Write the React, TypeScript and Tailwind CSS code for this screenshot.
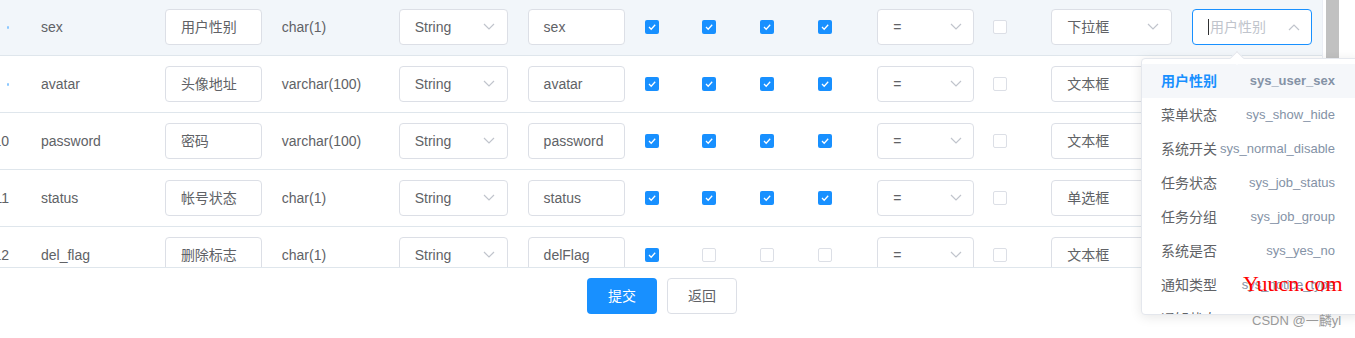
import React from "react";

const FONT = { fontFamily: '"Liberation Sans", "Noto Sans CJK SC", sans-serif' };

type Row = {
  idx: string;
  name: string;
  desc: string;
  type: string;
  field: string;
  checks: boolean[];
  html: string;
  hover?: boolean;
  dot?: boolean;
};

const rows: Row[] = [
  { idx: "8", name: "sex", desc: "用户性别", type: "char(1)", field: "sex", checks: [true, true, true, true], html: "下拉框", hover: true, dot: true },
  { idx: "9", name: "avatar", desc: "头像地址", type: "varchar(100)", field: "avatar", checks: [true, true, true, true], html: "文本框", dot: true },
  { idx: "10", name: "password", desc: "密码", type: "varchar(100)", field: "password", checks: [true, true, true, true], html: "文本框" },
  { idx: "11", name: "status", desc: "帐号状态", type: "char(1)", field: "status", checks: [true, true, true, true], html: "单选框" },
  { idx: "12", name: "del_flag", desc: "删除标志", type: "char(1)", field: "delFlag", checks: [true, false, false, false], html: "文本框" },
];

const dict = [
  ["用户性别", "sys_user_sex"],
  ["菜单状态", "sys_show_hide"],
  ["系统开关", "sys_normal_disable"],
  ["任务状态", "sys_job_status"],
  ["任务分组", "sys_job_group"],
  ["系统是否", "sys_yes_no"],
  ["通知类型", "sys_notice_type"],
  ["通知状态", "sys_notice_status"],
];

function Chevron({ up = false }: { up?: boolean }) {
  return (
    <svg width="12" height="8" viewBox="0 0 12 8" className="shrink-0">
      {up ? (
        <polyline points="1,7 6,2 11,7" fill="none" stroke="#c0c4cc" strokeWidth="1.2" />
      ) : (
        <polyline points="1,1 6,6 11,1" fill="none" stroke="#c0c4cc" strokeWidth="1.2" />
      )}
    </svg>
  );
}

function Check({ on }: { on: boolean }) {
  return on ? (
    <div className="w-[14px] h-[14px] rounded-[2px] bg-[#1890ff] flex items-center justify-center">
      <svg width="10" height="10" viewBox="0 0 10 10">
        <polyline points="2,5 4.2,7.2 8.2,2.8" fill="none" stroke="#fff" strokeWidth="1.3" />
      </svg>
    </div>
  ) : (
    <div className="w-[14px] h-[14px] rounded-[2px] bg-white border border-[#dcdfe6]" />
  );
}

function Input({ text }: { text: string }) {
  return (
    <div className="w-[97px] h-[36px] border border-[#dcdfe6] rounded-[4px] bg-white flex items-center px-[15px] text-[14px] text-[#606266] whitespace-nowrap overflow-hidden">
      {text}
    </div>
  );
}

function Select({ text, w, pr }: { text: string; w: string; pr: string }) {
  return (
    <div className={`${w} ${pr} h-[36px] border border-[#dcdfe6] rounded-[4px] bg-white flex items-center justify-between pl-[15px] text-[14px] text-[#606266] whitespace-nowrap`}>
      <span>{text}</span>
      <Chevron />
    </div>
  );
}

export default function App() {
  return (
    <div className="relative w-[1355px] h-[338px] bg-white overflow-hidden" style={FONT}>
      <div className="flex h-[268px] border-b border-[#dfe6ec]">
        <div className="w-[1323px] h-[267px] overflow-hidden border-r border-[#ebeef5]">
          <div className="mt-[-1px]">
            {rows.map((r) => (
              <div
                key={r.name}
                className={`flex items-center h-[57px] border-b border-[#dfe6ec] text-[14px] text-[#606266] ${r.hover ? "bg-[#f2f6fa]" : "bg-white"}`}
              >
                <div className="w-[31px] flex">
                  <div className="w-[9px] overflow-hidden flex justify-end whitespace-nowrap">
                    {r.dot ? <span className="w-[2px] h-[3px] bg-[#8cc8ff] rounded-full" /> : <span>{r.idx}</span>}
                  </div>
                </div>
                <div className="w-[124px] pl-[10px]">{r.name}</div>
                <div className="w-[117px] pl-[10px]">
                  <Input text={r.desc} />
                </div>
                <div className="w-[117px] pl-[10px]">{r.type}</div>
                <div className="w-[129px] pl-[10px]">
                  <Select text="String" w="w-[109px]" pr="pr-[12px]" />
                </div>
                <div className="w-[117px] pl-[10px]">
                  <Input text={r.field} />
                </div>
                {r.checks.map((c, i) => (
                  <div key={i} className="w-[58px] pl-[10px]">
                    <Check on={c} />
                  </div>
                ))}
                <div className="w-[117px] pl-[11px]">
                  <Select text="=" w="w-[97px]" pr="pr-[11px]" />
                </div>
                <div className="w-[58px] pl-[10px]">
                  <Check on={false} />
                </div>
                <div className="w-[141px] pl-[10px]">
                  <Select text={r.html} w="w-[121px]" pr="pr-[12px]" />
                </div>
                <div className="w-[140px] pl-[10px]">
                  {r.hover ? (
                    <div className="w-[120px] h-[36px] border border-[#1890ff] rounded-[4px] bg-white flex items-center justify-between pl-[15px] pr-[11px] text-[14px] text-[#c0c4cc] whitespace-nowrap">
                      <span className="flex items-center">
                        <span className="w-[1px] h-[16px] bg-[#303133] mr-[1px]" />
                        用户性别
                      </span>
                      <Chevron up />
                    </div>
                  ) : (
                    <Select text="" w="w-[120px]" pr="pr-[11px]" />
                  )}
                </div>
              </div>
            ))}
          </div>
        </div>
        <div className="w-[3px]" />
        <div className="w-[13px] h-[267px] bg-[#c1c1c1]" />
        <div className="flex-1 bg-white" />
      </div>

      <div className="flex gap-[10px] pl-[587px] pt-[10px]">
        <div className="w-[70px] h-[36px] rounded-[4px] bg-[#1890ff] text-white text-[14px] flex items-center justify-center">提交</div>
        <div className="w-[70px] h-[36px] rounded-[4px] bg-white border border-[#dcdfe6] text-[#606266] text-[14px] flex items-center justify-center">返回</div>
      </div>

      {/* dropdown */}
      <div className="absolute left-[1141px] top-[58px] w-[220px] h-[257px] bg-white border border-[#e4e7ed] rounded-[4px] shadow-[0_2px_12px_0_rgba(0,0,0,0.1)]">
        <div className="absolute left-[90px] top-[-6px] w-[10px] h-[10px] bg-white border-l border-t border-[#e4e7ed] rotate-45" />
        <div className="h-full overflow-hidden pt-[5px]">
          {dict.map(([a, b], i) => (
            <div
              key={b}
              className={`h-[34px] flex items-center justify-between pl-[19px] pr-[25px] whitespace-nowrap ${i === 0 ? "bg-[#f5f7fa]" : ""}`}
            >
              <span className={`text-[14px] ${i === 0 ? "text-[#1890ff] font-bold" : "text-[#606266]"}`}>{a}</span>
              <span className={`text-[13px] text-[#8492a6] ${i === 0 ? "font-bold" : ""}`}>{b}</span>
            </div>
          ))}
        </div>
      </div>

      <div className="absolute left-[1243px] top-[273px] text-[22px] text-[#ff0000] leading-none" style={{ fontFamily: '"Liberation Serif", serif' }}>
        Yuucn.com
      </div>
      <div className="absolute left-[1252px] top-[314px] text-[13px] text-[#999] leading-none" style={FONT}>
        CSDN @一麟yl
      </div>
    </div>
  );
}
